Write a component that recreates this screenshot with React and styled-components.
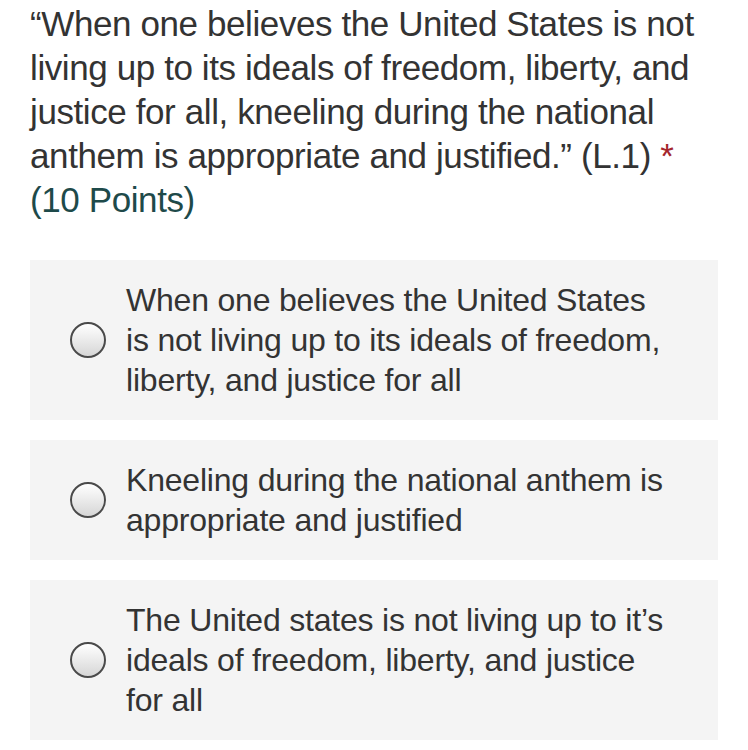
import React from "react";
import styled, { createGlobalStyle } from "styled-components";

const Global = createGlobalStyle`
  html, body { margin: 0; padding: 0; background: #fff; }
  body { font-family: "Liberation Sans", Arial, Helvetica, sans-serif; }
`;

const Page = styled.div`
  width: 748px;
  padding: 2px 30px 0 30px;
  box-sizing: border-box;
`;

const Question = styled.div`
  font-size: 35px;
  line-height: 44px;
  color: #333;
  letter-spacing: -0.4px;
  white-space: nowrap;
`;

const Star = styled.span`
  color: #a4262c;
`;

const Points = styled.div`
  color: #1e4a4a;
`;

const Options = styled.div`
  margin-top: 38px;
  display: flex;
  flex-direction: column;
  gap: 20px;
`;

const Card = styled.label`
  display: flex;
  align-items: center;
  gap: 20px;
  background: #f4f4f4;
  padding: 20px 40px 20px 40px;
`;

const Radio = styled.span`
  flex: none;
  width: 32px;
  height: 32px;
  border-radius: 50%;
  border: 2px solid #4a4a4a;
  background: linear-gradient(180deg, #ffffff 0%, #d6d6d6 100%);
`;

const OptionText = styled.span`
  font-size: 32px;
  line-height: 40px;
  color: #333;
  letter-spacing: -0.2px;
  white-space: nowrap;
`;

const options = [
  ["When one believes the United States", "is not living up to its ideals of freedom,", "liberty, and justice for all"],
  ["Kneeling during the national anthem is", "appropriate and justified"],
  ["The United states is not living up to it\u2019s", "ideals of freedom, liberty, and justice", "for all"],
];

const Lines = ({ lines }) =>
  lines.map((l, i) => (
    <React.Fragment key={i}>
      {i > 0 && <br />}
      {l}
    </React.Fragment>
  ));

export default function App() {
  return (
    <Page>
      <Global />
      <Question>
        <Lines
          lines={[
            "“When one believes the United States is not",
            "living up to its ideals of freedom, liberty, and",
            "justice for all, kneeling during the national",
            "anthem is appropriate and justified.” (L.1) ",
          ]}
        />
        <Star>*</Star>
        <Points>(10 Points)</Points>
      </Question>
      <Options>
        {options.map((o, i) => (
          <Card key={i}>
            <Radio />
            <OptionText>
              <Lines lines={o} />
            </OptionText>
          </Card>
        ))}
      </Options>
    </Page>
  );
}
